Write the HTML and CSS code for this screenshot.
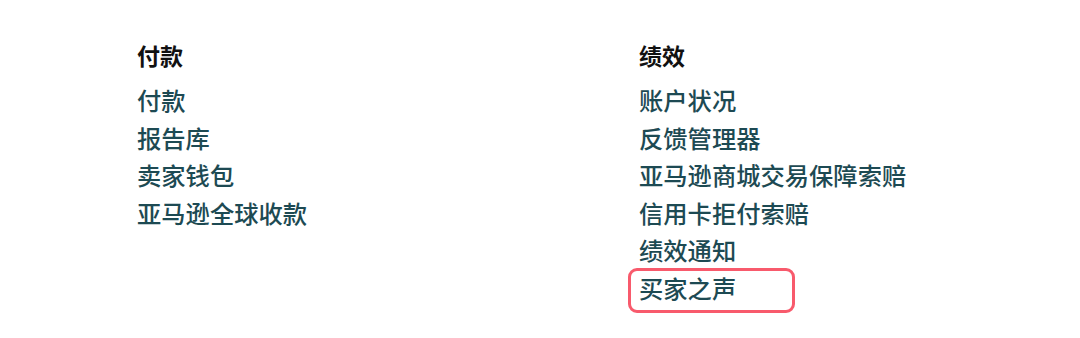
FILE: index.html
```html
<!DOCTYPE html>
<html lang="zh-CN">
<head>
<meta charset="utf-8">
<link rel="stylesheet" href="styles.css">
</head>
<body>
<div class="menu">
  <section class="col">
    <h2 class="col-title">付款</h2>
    <ul class="links">
      <li><a href="#">付款</a></li>
      <li><a href="#">报告库</a></li>
      <li><a href="#">卖家钱包</a></li>
      <li><a href="#">亚马逊全球收款</a></li>
    </ul>
  </section>
  <section class="col">
    <h2 class="col-title">绩效</h2>
    <ul class="links">
      <li><a href="#">账户状况</a></li>
      <li><a href="#">反馈管理器</a></li>
      <li><a href="#">亚马逊商城交易保障索赔</a></li>
      <li><a href="#">信用卡拒付索赔</a></li>
      <li><a href="#">绩效通知</a></li>
      <li class="highlight"><a href="#">买家之声</a></li>
    </ul>
  </section>
</div>
</body>
</html>
```
FILE: styles.css
```css
html, body {
  margin: 0;
  padding: 0;
  background: #ffffff;
}
body {
  width: 1080px;
  height: 338px;
  overflow: hidden;
  font-family: "Noto Sans CJK SC", "Noto Sans", sans-serif;
}
.menu {
  display: grid;
  grid-template-columns: 502px 1fr;
  padding: 37px 0 0 137px;
}
.col-title {
  margin: 0 0 7px 0;
  font-size: 23px;
  line-height: 37px;
  font-weight: 700;
  color: #111111;
}
.links {
  list-style: none;
  margin: 0;
  padding: 0;
}
.links li {
  font-size: 24.3px;
  line-height: 37.5px;
  font-weight: 500;
}
.links a {
  color: #1d4a53;
  text-decoration: none;
}
.highlight {
  position: relative;
}
.highlight::after {
  content: "";
  position: absolute;
  left: -11px;
  top: -1px;
  width: 161px;
  height: 39px;
  border: 3px solid #f85a6c;
  border-radius: 9px;
}
```
